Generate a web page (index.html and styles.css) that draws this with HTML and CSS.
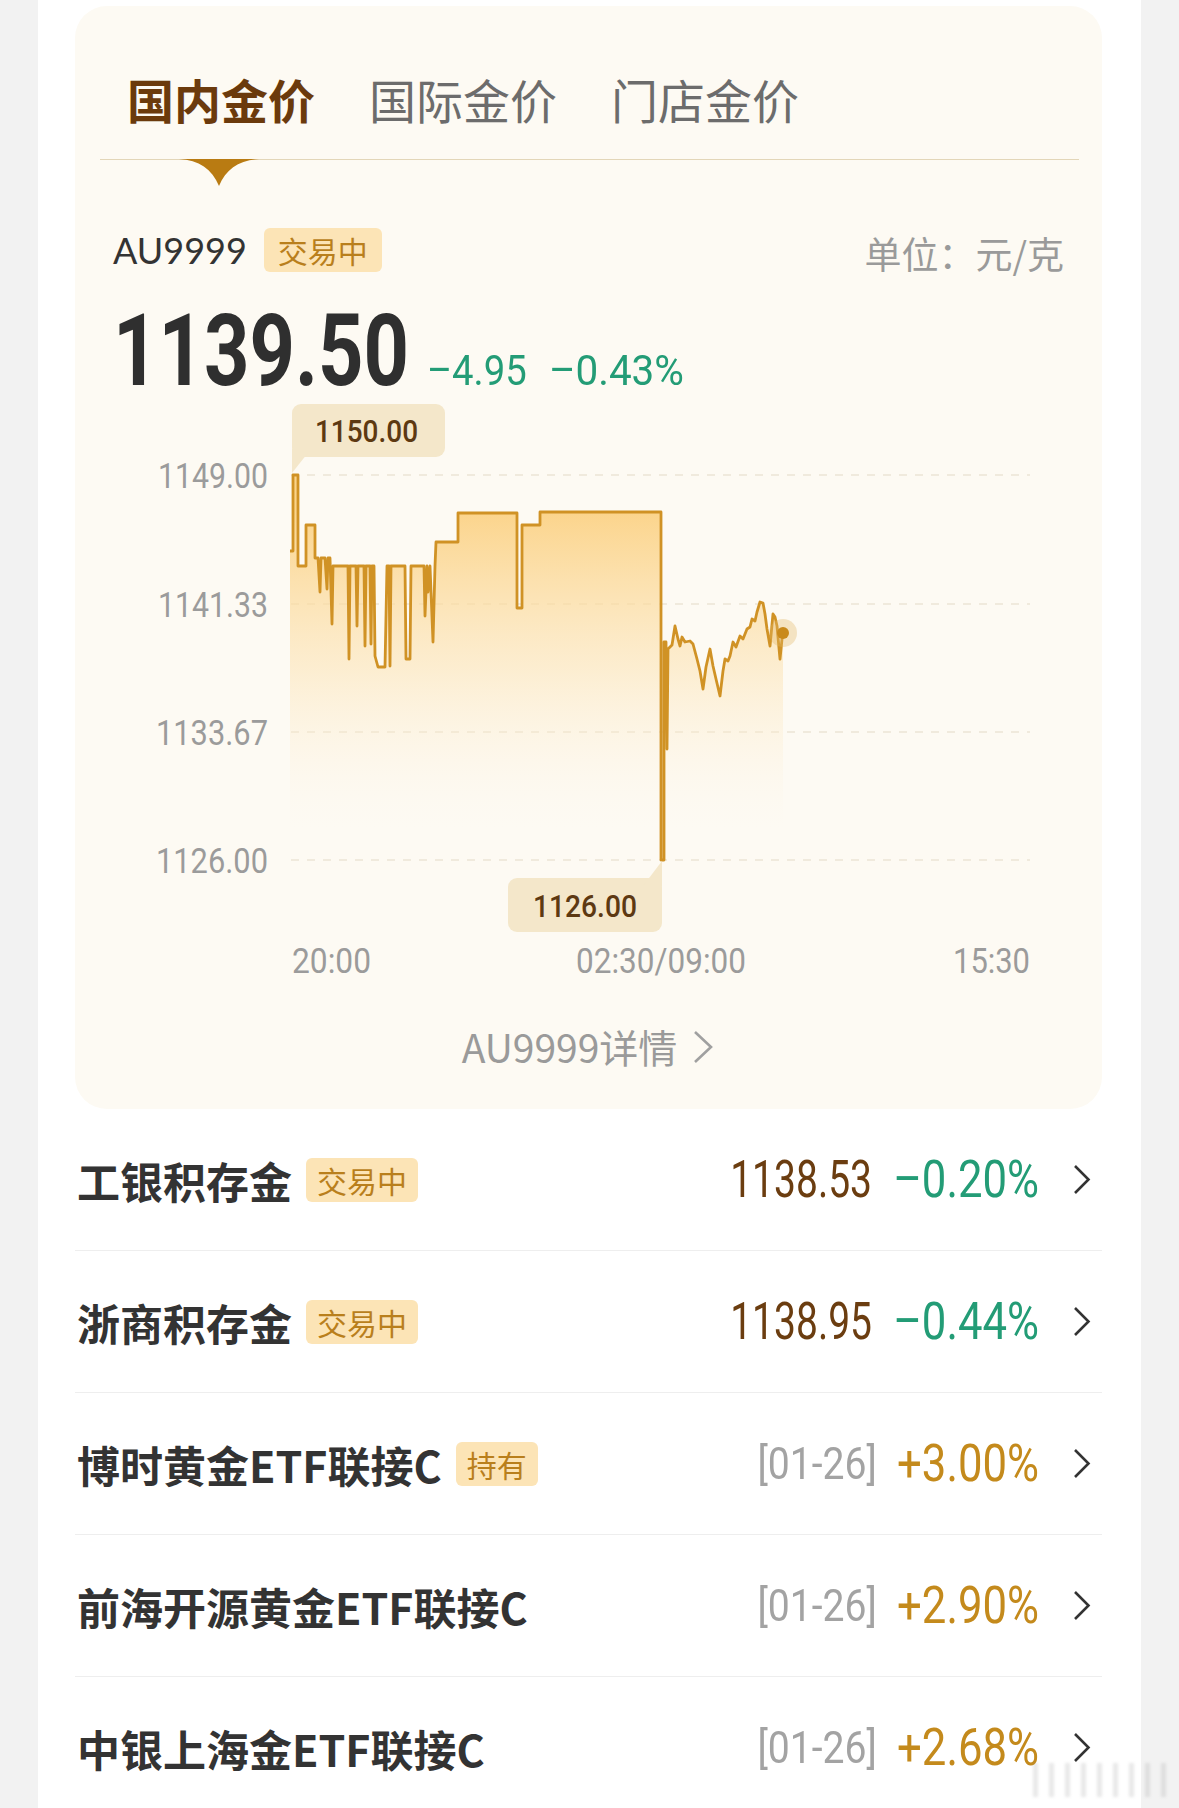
FILE: index.html
```html
<!DOCTYPE html>
<html lang="zh-CN">
<head>
    <meta charset="UTF-8">
    <meta name="viewport" content="width=device-width, initial-scale=1.0">
    <title>金价</title>
    <link rel="stylesheet" href="styles.css">
</head>
<body>
    <div class="page">
        <section class="card">
            <div class="tabs">
                <span class="tab active">国内金价</span>
                <span class="tab">国际金价</span>
                <span class="tab">门店金价</span>
                <svg class="tab-arrow" width="80" height="27" viewBox="0 0 80 27">
                    <path d="M0 0 H80 C60 1 47 10 40 27 C33 10 20 1 0 0 Z" fill="#b97b12"/>
                </svg>
            </div>

            <div class="quote-head">
                <div class="code">AU9999 <span class="tag">交易中</span></div>
                <div class="unit">单位：元/克</div>
            </div>

            <div class="quote-price">
                <span class="last">1139.50</span>
                <span class="chg down w1">–4.95</span>
                <span class="chg down w2">–0.43%</span>
            </div>

            <!-- intraday chart, drawn in page coordinates and shifted into place -->
            <svg class="chart" width="1027" height="595" viewBox="0 0 1027 595">
                <defs>
                    <linearGradient id="area" gradientUnits="userSpaceOnUse" x1="0" y1="510" x2="0" y2="830">
                        <stop offset="0" stop-color="#fbcd78" stop-opacity="0.85"/>
                        <stop offset="0.5" stop-color="#fce3b4" stop-opacity="0.55"/>
                        <stop offset="1" stop-color="#fdf5e6" stop-opacity="0"/>
                    </linearGradient>
                </defs>
                <g transform="translate(-75 -405)">
                    <g class="grid">
                        <line x1="291" y1="476" x2="1030" y2="476"/>
                        <line x1="291" y1="605" x2="1030" y2="605"/>
                        <line x1="291" y1="733" x2="1030" y2="733"/>
                        <line x1="291" y1="861" x2="1030" y2="861"/>
                    </g>
                    <g class="axis">
                        <text x="158" y="489" textLength="110" lengthAdjust="spacingAndGlyphs">1149.00</text>
                        <text x="158" y="618" textLength="110" lengthAdjust="spacingAndGlyphs">1141.33</text>
                        <text x="156" y="746" textLength="112" lengthAdjust="spacingAndGlyphs">1133.67</text>
                        <text x="156" y="874" textLength="112" lengthAdjust="spacingAndGlyphs">1126.00</text>
                        <text x="292" y="974" textLength="79" lengthAdjust="spacingAndGlyphs">20:00</text>
                        <text x="576" y="974" textLength="170" lengthAdjust="spacingAndGlyphs">02:30/09:00</text>
                        <text x="953" y="974" textLength="77" lengthAdjust="spacingAndGlyphs">15:30</text>
                    </g>

                    <path class="area" d="M290,552 H293 V476 H298 V567 H306 V526 H315 V559 H318 L320,593 L321,559 H325 L327,590 L328,559 H330 L332,625 L333,567 H348 L349,660 L350,567 H356 L357,627 L358,567 H364 L365,647 L366,567 H370 L371,645 L372,567 H374 L375,657 L378,668 H385 L387,567 H389 L390,667 L391,567 H405 L406,660 H410 L411,567 H424 L425,617 L427,567 L428,593 L430,567 L433,643 L435,567 L436,543 H458 V514 H517 V609 H522 V526 H540 V513 H661 V861 H664 V643 H666 L667,750 L668,650 L672,646 L675,627 L678,640 L680,647 L682,638 L685,643 L690,642 L693,645 L697,660 L700,672 L703,690 L706,668 L710,650 L713,667 L716,680 L720,697 L723,672 L725,660 L728,662 L730,657 L733,643 L736,648 L740,637 L743,640 L747,630 L750,628 L752,620 L755,622 L757,613 L760,603 L763,604 L765,615 L767,630 L770,647 L773,615 L775,618 L777,627 L780,660 L782,640 L783,633 L783,861 H290 Z"/>
                    <path class="line" d="M290,552 H293 V476 H298 V567 H306 V526 H315 V559 H318 L320,593 L321,559 H325 L327,590 L328,559 H330 L332,625 L333,567 H348 L349,660 L350,567 H356 L357,627 L358,567 H364 L365,647 L366,567 H370 L371,645 L372,567 H374 L375,657 L378,668 H385 L387,567 H389 L390,667 L391,567 H405 L406,660 H410 L411,567 H424 L425,617 L427,567 L428,593 L430,567 L433,643 L435,567 L436,543 H458 V514 H517 V609 H522 V526 H540 V513 H661 V861 H664 V643 H666 L667,750 L668,650 L672,646 L675,627 L678,640 L680,647 L682,638 L685,643 L690,642 L693,645 L697,660 L700,672 L703,690 L706,668 L710,650 L713,667 L716,680 L720,697 L723,672 L725,660 L728,662 L730,657 L733,643 L736,648 L740,637 L743,640 L747,630 L750,628 L752,620 L755,622 L757,613 L760,603 L763,604 L765,615 L767,630 L770,647 L773,615 L775,618 L777,627 L780,660 L782,640 L783,633"/>
                    <circle cx="783" cy="634" r="14" fill="#e2b866" fill-opacity="0.35"/>
                    <circle cx="783" cy="634" r="6" fill="#c98a1c"/>

                    <g class="tip">
                        <rect x="292" y="405" width="153" height="53" rx="9"/>
                        <path d="M292,450 V474 L311,450 Z"/>
                        <text x="315" y="443" textLength="103" lengthAdjust="spacingAndGlyphs">1150.00</text>
                    </g>
                    <g class="tip">
                        <rect x="508" y="879" width="154" height="54" rx="9"/>
                        <path d="M662,887 V862 L643,887 Z"/>
                        <text x="533" y="918" textLength="104" lengthAdjust="spacingAndGlyphs">1126.00</text>
                    </g>
                </g>
            </svg>

            <div class="more">
                <span>AU9999详情</span>
                <svg width="24" height="36" viewBox="0 0 24 36"><path d="M4 3 L20 18 L4 33" fill="none" stroke="#a0a0a0" stroke-width="2.6"/></svg>
            </div>
        </section>

        <ul class="list">
            <li class="row">
                <span class="name">工银积存金</span>
                <span class="tag">交易中</span>
                <span class="right">
                    <span class="num price">1138.53</span>
                    <span class="num chg down">–0.20%</span>
                    <svg class="arrow" width="18" height="31" viewBox="0 0 18 31"><path d="M2 2 L15.5 15.5 L2 29" fill="none" stroke="#333" stroke-width="2.6"/></svg>
                </span>
            </li>
            <li class="row">
                <span class="name">浙商积存金</span>
                <span class="tag">交易中</span>
                <span class="right">
                    <span class="num price">1138.95</span>
                    <span class="num chg down">–0.44%</span>
                    <svg class="arrow" width="18" height="31" viewBox="0 0 18 31"><path d="M2 2 L15.5 15.5 L2 29" fill="none" stroke="#333" stroke-width="2.6"/></svg>
                </span>
            </li>
            <li class="row">
                <span class="name">博时黄金ETF联接C</span>
                <span class="tag">持有</span>
                <span class="right">
                    <span class="num date">[01-26]</span>
                    <span class="num chg up">+3.00%</span>
                    <svg class="arrow" width="18" height="31" viewBox="0 0 18 31"><path d="M2 2 L15.5 15.5 L2 29" fill="none" stroke="#333" stroke-width="2.6"/></svg>
                </span>
            </li>
            <li class="row">
                <span class="name">前海开源黄金ETF联接C</span>
                <span class="right">
                    <span class="num date">[01-26]</span>
                    <span class="num chg up">+2.90%</span>
                    <svg class="arrow" width="18" height="31" viewBox="0 0 18 31"><path d="M2 2 L15.5 15.5 L2 29" fill="none" stroke="#333" stroke-width="2.6"/></svg>
                </span>
            </li>
            <li class="row">
                <span class="name">中银上海金ETF联接C</span>
                <span class="right">
                    <span class="num date">[01-26]</span>
                    <span class="num chg up">+2.68%</span>
                    <svg class="arrow" width="18" height="31" viewBox="0 0 18 31"><path d="M2 2 L15.5 15.5 L2 29" fill="none" stroke="#333" stroke-width="2.6"/></svg>
                </span>
            </li>
        </ul>
    </div>
    <div class="watermark"></div>
</body>
</html>
```

FILE: styles.css
```css
body {
    position: relative;
    margin: 0;
    background: #f2f2f2;
    font-family: "Noto Sans CJK SC", "Noto Sans", sans-serif;
    color: #333;
}
.page {
    width: 1103px;
    min-height: 1808px;
    margin-left: 38px;
    padding: 6px 39px 0 37px;
    box-sizing: border-box;
    background: #fff;
    overflow: hidden;
}

/* top card */
.card {
    background: #fdfaf3;
    border-radius: 32px;
    padding-bottom: 38px;
}
.tabs {
    position: relative;
    display: flex;
    gap: 54px;
    margin: 0 23px 0 25px;
    padding: 65px 0 32px 27px;
    border-bottom: 1.5px solid #e3d6b8;
}
.tab {
    font-size: 47px;
    line-height: 56px;
    color: #6c6c6c;
}
.tab.active {
    color: #6b3a0c;
    font-weight: bold;
}
.tab-arrow {
    position: absolute;
    left: 79px;
    top: 100%;
    display: block;
}

.quote-head {
    display: flex;
    align-items: center;
    justify-content: space-between;
    height: 44px;
    margin-top: 68px;
    padding: 0 38px;
}
.code {
    display: flex;
    align-items: center;
    gap: 17px;
    font-family: Lato, "Noto Sans", sans-serif;
    font-size: 36px;
    color: #333;
}
.tag {
    display: inline-block;
    height: 44px;
    padding: 0 14px;
    border-radius: 6px;
    background: #fce4b6;
    color: #b97f1c;
    font-family: "Noto Sans CJK SC", sans-serif;
    font-size: 30px;
    line-height: 44px;
}
.unit {
    font-size: 37px;
    color: #9a9a9a;
    margin-top: 6px;
}

/* numbers: Roboto squeezed horizontally to look like the condensed app font */
.quote-price {
    display: flex;
    align-items: baseline;
    height: 106px;
    margin-top: 26px;
    padding-left: 38px;
    font-family: Roboto, sans-serif;
    line-height: 106px;
    white-space: nowrap;
}
.last {
    width: 299px;
    font-size: 101px;
    font-weight: bold;
    color: #2f2f2f;
    transform: scaleX(0.785);
    transform-origin: left center;
}
.quote-price .chg {
    font-size: 43px;
    transform-origin: left center;
}
.quote-price .w1 {
    width: 98px;
    margin-left: 15px;
    transform: scaleX(0.89);
}
.quote-price .w2 {
    width: 134px;
    margin-left: 24px;
    transform: scaleX(0.94);
}
.down { color: #239c76; }
.up { color: #c48a1c; }

.chart {
    display: block;
}
.chart .grid line {
    stroke: #ece5d6;
    stroke-width: 1.5;
    stroke-dasharray: 8 8;
}
.chart text {
    font-family: Roboto, sans-serif;
    font-size: 35px;
    fill: #9b9b9b;
}
.chart .area {
    fill: url(#area);
}
.chart .line {
    fill: none;
    stroke: #d09225;
    stroke-width: 2.8;
    stroke-linejoin: round;
}
.chart .tip rect,
.chart .tip path {
    fill: #f4e7ca;
}
.chart .tip text {
    font-size: 32px;
    font-weight: 500;
    fill: #5d3912;
}

.more {
    display: flex;
    align-items: center;
    justify-content: center;
    gap: 14px;
    height: 50px;
    margin-top: 22px;
    font-size: 39px;
    color: #9a9a9a;
}
.more svg {
    display: block;
    margin-top: 2px;
}

/* product list */
.list {
    list-style: none;
    margin: 0;
    padding: 0;
}
.row {
    display: flex;
    align-items: center;
    height: 142px;
    padding: 0 11px 0 2px;
    box-sizing: border-box;
    border-bottom: 1.5px solid #eeeeee;
}
.row .name {
    font-size: 43px;
    font-weight: bold;
    color: #333;
}
.row .tag {
    margin-left: 14px;
    padding: 0 11px;
}
.right {
    display: flex;
    align-items: center;
    margin-left: auto;
    font-family: Roboto, sans-serif;
    white-space: nowrap;
}
.num {
    display: inline-flex;
    justify-content: flex-end;
    transform: scaleX(0.75);
    transform-origin: right center;
}
.price {
    width: 142px;
    font-size: 52px;
    color: #6b3d10;
}
.date {
    width: 118px;
    margin-right: -5px;
    font-size: 44px;
    color: #a3a3a3;
    transform: scaleX(0.89);
}
.right .chg {
    width: 142px;
    margin-left: 25px;
    font-size: 52px;
    transform: scaleX(0.84);
}
.right .arrow {
    display: block;
    margin-left: 34px;
}

.watermark {
    position: absolute;
    left: 1033px;
    top: 1763px;
    width: 134px;
    height: 34px;
    opacity: 0.22;
    background: repeating-linear-gradient(90deg, #999 0 5px, transparent 5px 16px);
    filter: blur(1.5px);
}
```
